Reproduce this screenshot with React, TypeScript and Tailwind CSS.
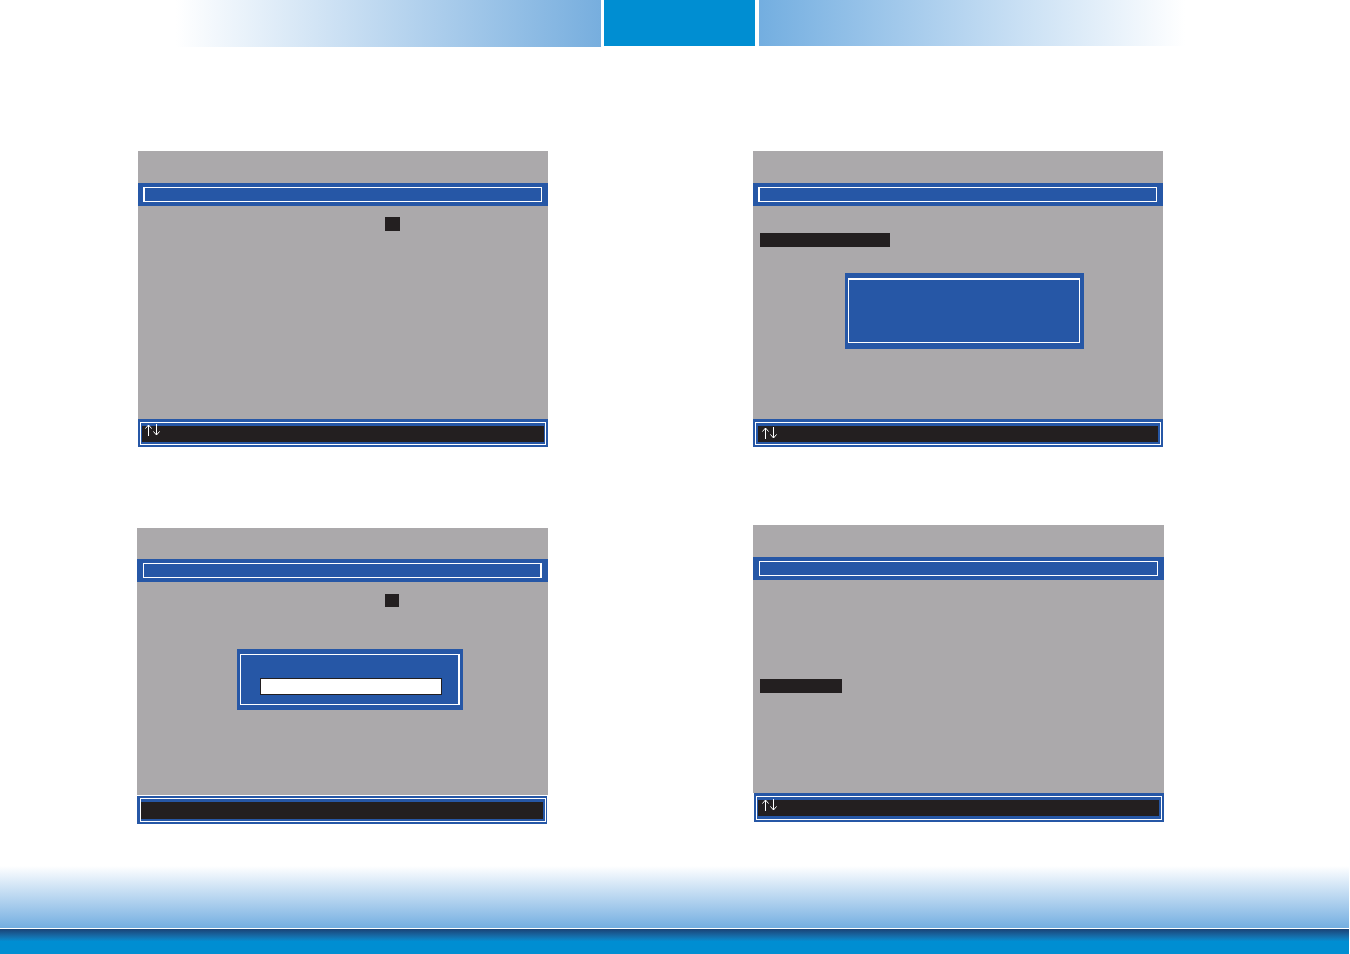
import type { ReactNode } from 'react';
import clsx from 'clsx';

interface ScreenProps {
  label: string;
  titleClass: string;
  frameClass: string;
  footerClass: string;
  footerInnerClass: string;
  hintClass?: string;
  children: ReactNode;
}

function ArrowKeys({ className }: { className: string }) {
  return (
    <svg
      viewBox="0 0 15 12"
      className={clsx('absolute h-3 w-[15px]', className)}
      fill="none"
      stroke="#ffffff"
      strokeWidth="1"
      role="img"
      aria-label="Up and down arrow keys"
    >
      <path d="M3.5 12V1M0.4 4.6L3.5 1L6.6 4.6" />
      <path d="M11.5 0V11M8.4 7.4L11.5 11L14.6 7.4" />
    </svg>
  );
}

function Screen({ label, titleClass, frameClass, footerClass, footerInnerClass, hintClass, children }: ScreenProps) {
  return (
    <section aria-label={label} className="min-w-0">
      <div className={clsx('bg-[#aba9ab]', titleClass)}></div>
      <div className="bg-[#2657a6] py-1">
        <div className={clsx('border-white', frameClass)}></div>
      </div>
      <div className="h-[213px] bg-[#aba9ab]">{children}</div>
      <div className={clsx('bg-[#2657a6]', footerClass)}>
        <div className={clsx('relative border border-white', footerInnerClass)}>
          <div className="h-full bg-[#231f20]"></div>
          {hintClass && <ArrowKeys className={hintClass} />}
        </div>
      </div>
    </section>
  );
}

export default function App() {
  return (
    <div className="flex min-h-screen flex-col bg-white font-['Liberation_Sans',sans-serif]">
      <header className="flex h-[47px] items-start justify-center pl-[11px]">
        <div className="h-[47px] w-[425px] bg-linear-to-r from-white to-[#77aede]"></div>
        <div className="mr-1 ml-[3px] h-[46px] w-[151px] bg-[#008ed2]"></div>
        <div className="h-[46px] w-[426px] bg-linear-to-l from-white to-[#73aee0]"></div>
      </header>

      <main className="pt-[104px] pb-[42px]">
        <div className="grid grid-cols-2 gap-[205px] pr-[187px] pl-[138px]">
          <Screen
            label="Menu"
            titleClass="h-8"
            frameClass="ml-[5px] mr-[6px] h-[15px] border border-l-2"
            footerClass="h-7 px-[2px] pt-[3px] pb-[2px]"
            footerInnerClass="h-[23px] pl-px pr-px pt-[3px] pb-[2px]"
            hintClass="left-1 top-px"
          >
            <div className="pt-[11px] pl-[247px]">
              <div className="h-[14px] w-[15px] bg-[#231f20]"></div>
            </div>
          </Screen>

          <Screen
            label="Confirmation"
            titleClass="h-8"
            frameClass="ml-[5px] mr-[6px] h-[15px] border border-l-2"
            footerClass="h-7 px-[2px] pt-[3px] pb-[2px]"
            footerInnerClass="h-[23px] px-[2px] pt-[3px] pb-[2px]"
            hintClass="left-[6px] top-1"
          >
            <div className="pt-[27px] pl-[7px]">
              <div className="h-[14px] w-[130px] bg-[#231f20]"></div>
            </div>
            <div
              role="dialog"
              aria-label="Confirm"
              className="mt-[26px] ml-[92px] h-[76px] w-[239px] bg-[#2657a6] pt-[5px] pr-1 pb-[6px] pl-[3px]"
            >
              <div className="h-full border border-t-2 border-white"></div>
            </div>
          </Screen>
        </div>

        <div className="grid grid-cols-2 gap-[205px] pt-[78px] pr-[186px] pl-[137px]">
          <div className="pt-[3px]">
            <Screen
              label="Input"
              titleClass="h-[31px]"
              frameClass="mx-[6px] h-[15px] border border-r-2"
              footerClass="mt-px mr-px h-7 pl-[3px] pr-px py-[2px]"
              footerInnerClass="h-6 pr-[2px] pt-[3px] pb-[2px]"
            >
              <div className="pt-3 pl-[248px]">
                <div className="h-[13px] w-[14px] bg-[#231f20]"></div>
              </div>
              <div
                role="dialog"
                aria-label="Enter value"
                className="mt-[42px] ml-[100px] h-[61px] w-[226px] bg-[#2657a6] px-[3px] py-[5px]"
              >
                <div className="h-full border border-r-2 border-white px-[19px] pt-[23px]">
                  <input
                    type="text"
                    aria-label="Value"
                    className="block h-[17px] w-[182px] border border-[#231f20] bg-white px-1 text-xs outline-none"
                  />
                </div>
              </div>
            </Screen>
          </div>

          <Screen
            label="Menu selection"
            titleClass="h-8"
            frameClass="mx-[6px] h-[15px] border"
            footerClass="ml-px h-[29px] px-[2px] pt-[3px] pb-[2px]"
            footerInnerClass="h-6 pl-px pr-[2px] pt-[3px] pb-[3px]"
            hintClass="left-[5px] top-[2px]"
          >
            <div className="pt-[99px] pl-[7px]">
              <div className="h-[14px] w-[82px] bg-[#231f20]"></div>
            </div>
          </Screen>
        </div>
      </main>

      <footer className="mt-auto pr-px">
        <div className="h-[62px] bg-linear-to-b from-white to-[#73aee0]"></div>
        <div className="mt-px h-[25px] bg-linear-to-b from-[#194376] to-[#008ed2] to-50%"></div>
      </footer>
    </div>
  );
}
